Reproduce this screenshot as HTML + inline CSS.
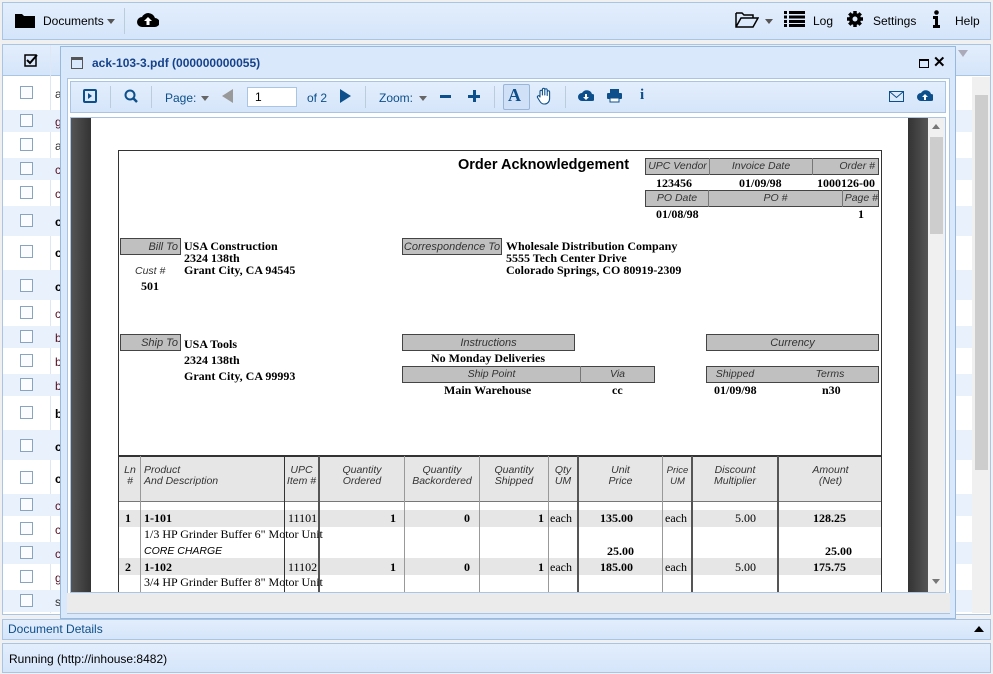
<!DOCTYPE html>
<html><head><meta charset="utf-8"><style>
*{box-sizing:border-box;margin:0;padding:0}
body{width:993px;height:674px;overflow:hidden;background:#f0f0f0;font-family:"Liberation Sans",sans-serif;font-size:12px;position:relative;color:#000}
.a{position:absolute}
.bar{background:linear-gradient(#e3eefc,#d5e5fa);border:1px solid #a9c5e3}
.lb{position:absolute;background:#c0c0c0;border:1px solid #444;font-style:italic;font-size:11px;color:#333;height:17px;line-height:16px;text-align:center}
.sr{font-family:"Liberation Serif",serif;font-weight:bold;font-size:12px;position:absolute;line-height:13px}
.srn{font-family:"Liberation Serif",serif;font-size:12px;position:absolute;line-height:13px}
.hd{position:absolute;font-style:italic;font-size:10.5px;color:#333;line-height:11px;text-align:center}
.vl{position:absolute;width:1px;background:#999}
.vt{position:absolute;width:2px;background:#555}
.cb{position:absolute;left:20px;width:13px;height:13px;border:1px solid #8aa4c0;background:#fafcff}
.tb{color:#0d4f8b;font-size:12px}
</style></head><body>
<div class="a bar" style="left:2px;top:2px;width:989px;height:38px"></div>
<svg class="a" style="left:15px;top:12px" width="20" height="16"><path d="M0 2h7l2 2h11v12H0z" fill="#000"/></svg>
<div class="a" style="left:43px;top:14px;font-size:12px">Documents</div>
<div class="a" style="left:107px;top:19px;border:4px solid transparent;border-top:5px solid #555"></div>
<div class="a" style="left:124px;top:8px;width:1px;height:26px;background:#bcd"></div>
<svg class="a" style="left:137px;top:10px" width="22" height="18"><path d="M5 17a5 5 0 0 1 0-10a7 7 0 0 1 13 1a4.5 4.5 0 0 1 0 9z" fill="#000"/><path d="M11 7l-4 4h2.5v4h3v-4H15z" fill="#fff"/></svg>
<svg class="a" style="left:735px;top:11px" width="24" height="17"><path d="M1 2h6l2 2h9v3M1 2v14h17l5-9H6L1 16" fill="none" stroke="#000" stroke-width="1.5"/></svg>
<div class="a" style="left:765px;top:19px;border:4px solid transparent;border-top:5px solid #555"></div>
<svg class="a" style="left:784px;top:11px" width="21" height="16"><g fill="#000"><rect x="0" y="0" width="3" height="3"/><rect x="5" y="0" width="16" height="3"/><rect x="0" y="4.5" width="3" height="3"/><rect x="5" y="4.5" width="16" height="3"/><rect x="0" y="9" width="3" height="3"/><rect x="5" y="9" width="16" height="3"/><rect x="0" y="13" width="3" height="3"/><rect x="5" y="13" width="16" height="3"/></g></svg>
<div class="a" style="left:813px;top:14px">Log</div>
<svg class="a" style="left:846px;top:10px" width="18" height="18" viewBox="0 0 18 18"><g fill="#000"><circle cx="9" cy="9" r="6"/><g stroke="#000" stroke-width="3.5"><path d="M9 1v16M1 9h16M3.3 3.3l11.4 11.4M14.7 3.3L3.3 14.7"/></g></g><circle cx="9" cy="9" r="2.5" fill="#dbe9fb"/></svg>
<div class="a" style="left:873px;top:14px">Settings</div>
<svg class="a" style="left:932px;top:10px" width="9" height="18"><circle cx="4.5" cy="2.5" r="2.3" fill="#000"/><path d="M1 6h5v9h2v3H1v-3h2V9H1z" fill="#000"/></svg>
<div class="a" style="left:955px;top:14px">Help</div>

<div class="a" style="left:2px;top:44px;width:989px;height:571px;background:#fff;border:1px solid #a9c5e3"></div>
<div class="a bar" style="left:3px;top:45px;width:987px;height:31px;border:none;border-bottom:1px solid #a9c5e3"></div>
<div class="a" style="left:50px;top:45px;width:1px;height:568px;background:#dde8f4"></div>
<svg class="a" style="left:24px;top:53px" width="15" height="14"><rect x="1" y="2" width="11" height="11" fill="none" stroke="#000" stroke-width="1.5"/><path d="M3 7l3 3 7-8" fill="none" stroke="#000" stroke-width="2"/></svg>
<div class="a" style="left:958px;top:50px;border:5px solid transparent;border-top:7px solid #aab"></div>
<div class="a" style="left:972px;top:77px;width:18px;height:536px;background:#f0f0f0"></div>
<div class="a" style="left:975px;top:95px;width:13px;height:375px;background:#cdcdcd"></div>
<div class="a" style="left:3px;top:110px;width:969px;height:22px;background:#e8f1fc"></div>
<div class="a" style="left:3px;top:158px;width:969px;height:22px;background:#e8f1fc"></div>
<div class="a" style="left:3px;top:206px;width:969px;height:30px;background:#e8f1fc"></div>
<div class="a" style="left:3px;top:270px;width:969px;height:30px;background:#e8f1fc"></div>
<div class="a" style="left:3px;top:326px;width:969px;height:22px;background:#e8f1fc"></div>
<div class="a" style="left:3px;top:374px;width:969px;height:22px;background:#e8f1fc"></div>
<div class="a" style="left:3px;top:430px;width:969px;height:30px;background:#e8f1fc"></div>
<div class="a" style="left:3px;top:494px;width:969px;height:22px;background:#e8f1fc"></div>
<div class="a" style="left:3px;top:542px;width:969px;height:22px;background:#e8f1fc"></div>
<div class="a" style="left:3px;top:590px;width:969px;height:22px;background:#e8f1fc"></div>
<div class="cb" style="top:86px"></div><div class="cb" style="top:114px"></div><div class="cb" style="top:138px"></div><div class="cb" style="top:162px"></div><div class="cb" style="top:186px"></div><div class="cb" style="top:214px"></div><div class="cb" style="top:245px"></div><div class="cb" style="top:279px"></div><div class="cb" style="top:306px"></div><div class="cb" style="top:330px"></div><div class="cb" style="top:354px"></div><div class="cb" style="top:378px"></div><div class="cb" style="top:406px"></div><div class="cb" style="top:439px"></div><div class="cb" style="top:471px"></div><div class="cb" style="top:498px"></div><div class="cb" style="top:522px"></div><div class="cb" style="top:546px"></div><div class="cb" style="top:570px"></div><div class="cb" style="top:594px"></div>
<div class="a" style="left:55px;top:87px;line-height:14px;color:#333">a<br><br><span style="color:#512">g</span></div>
<div class="a" style="left:55px;top:139px;color:#333">a</div><div class="a" style="left:55px;top:163px;color:#512">c</div><div class="a" style="left:55px;top:187px;color:#512">c</div>
<div class="a" style="left:55px;top:215px;font-weight:bold">c</div><div class="a" style="left:55px;top:246px;font-weight:bold">c</div><div class="a" style="left:55px;top:280px;font-weight:bold">c</div>
<div class="a" style="left:55px;top:307px;color:#512">c</div><div class="a" style="left:55px;top:331px;color:#512">b</div><div class="a" style="left:55px;top:355px;color:#512">b</div><div class="a" style="left:55px;top:379px;color:#512">b</div>
<div class="a" style="left:55px;top:407px;font-weight:bold">b</div><div class="a" style="left:55px;top:440px;font-weight:bold">c</div><div class="a" style="left:55px;top:472px;font-weight:bold">c</div>
<div class="a" style="left:55px;top:499px;color:#512">c</div><div class="a" style="left:55px;top:523px;color:#512">c</div><div class="a" style="left:55px;top:547px;color:#512">c</div><div class="a" style="left:55px;top:571px;color:#512">g</div><div class="a" style="left:55px;top:595px;color:#333">s</div>

<div class="a bar" style="left:2px;top:619px;width:989px;height:21px"></div>
<div class="a" style="left:8px;top:622px;color:#0d4f8b">Document Details</div>
<div class="a" style="left:974px;top:626px;border:5px solid transparent;border-bottom:6px solid #000;border-top:0"></div>
<div class="a bar" style="left:2px;top:643px;width:989px;height:30px"></div>
<div class="a" style="left:9px;top:652px">Running (http://inhouse:8482)</div>

<div class="a" style="left:60px;top:46px;width:896px;height:573px;background:#dae8fb;border:1px solid #98b8dc"></div>
<svg class="a" style="left:71px;top:57px" width="12" height="12"><rect x=".5" y=".5" width="11" height="11" fill="none" stroke="#555"/><rect x="1" y="1" width="10" height="2" fill="#555"/></svg>
<div class="a" style="left:92px;top:56px;font-weight:bold;font-size:12px;color:#15428b">ack-103-3.pdf (000000000055)</div>
<div class="a" style="left:919px;top:59px;width:10px;height:9px;border:1px solid #000;border-top-width:2px"></div>
<div class="a" style="left:933px;top:53px;font-size:15px;font-weight:bold">✕</div>
<div class="a" style="left:67px;top:78px;width:883px;height:536px;background:#fff;border:1px solid #a9c5e3"></div>
<div class="a bar" style="left:70px;top:81px;width:876px;height:32px"></div>
<svg class="a" style="left:83px;top:89px" width="14" height="14"><rect x="1" y="1" width="12" height="12" rx="1" fill="none" stroke="#0d4f8b" stroke-width="2"/><path d="M5 4l4 3-4 3z" fill="#0d4f8b"/></svg>
<div class="a" style="left:110px;top:86px;width:1px;height:22px;background:#bcd"></div>
<svg class="a" style="left:124px;top:89px" width="14" height="14"><circle cx="6" cy="6" r="4.5" fill="none" stroke="#0d4f8b" stroke-width="2"/><path d="M9 9l4 4" stroke="#0d4f8b" stroke-width="2.5"/></svg>
<div class="a" style="left:151px;top:86px;width:1px;height:22px;background:#bcd"></div>
<div class="a tb" style="left:165px;top:91px">Page:</div>
<div class="a" style="left:201px;top:96px;border:4px solid transparent;border-top:5px solid #666"></div>
<div class="a" style="left:222px;top:89px;border:7px solid transparent;border-right:11px solid #999;border-left:0"></div>
<div class="a" style="left:247px;top:87px;width:50px;height:20px;background:#fff;border:1px solid #a9c5e3;padding:2px 7px">1</div>
<div class="a tb" style="left:307px;top:91px">of 2</div>
<div class="a" style="left:340px;top:89px;border:7px solid transparent;border-left:11px solid #0d4f8b;border-right:0"></div>
<div class="a" style="left:365px;top:86px;width:1px;height:22px;background:#bcd"></div>
<div class="a tb" style="left:379px;top:91px">Zoom:</div>
<div class="a" style="left:419px;top:96px;border:4px solid transparent;border-top:5px solid #666"></div>
<div class="a" style="left:440px;top:95px;width:11px;height:3px;background:#0d4f8b"></div>
<div class="a" style="left:468px;top:95px;width:12px;height:3px;background:#0d4f8b"></div>
<div class="a" style="left:473px;top:90px;width:3px;height:12px;background:#0d4f8b"></div>
<div class="a" style="left:494px;top:86px;width:1px;height:22px;background:#bcd"></div>
<div class="a" style="left:503px;top:84px;width:27px;height:26px;border:1px solid #99b5d8;background:#cfe0f7;border-radius:2px"></div>
<div class="a" style="left:508px;top:85px;font-family:'Liberation Serif',serif;font-weight:bold;font-size:18px;color:#0d4f8b">A</div>
<svg class="a" style="left:536px;top:87px" width="16" height="18" viewBox="0 0 16 18"><path d="M4 10V4.5a1.2 1.2 0 0 1 2.4 0V8V2.5a1.2 1.2 0 0 1 2.4 0V8V3a1.2 1.2 0 0 1 2.4 0V8.5V5a1.2 1.2 0 0 1 2.4 0v6.5c0 3-2 5.5-5 5.5H8c-2 0-3-1-4-2.5L1.5 10.5a1.2 1.2 0 0 1 2-1.3z" fill="#fff" stroke="#0d4f8b" stroke-width="1.1" stroke-linejoin="round"/></svg>
<div class="a" style="left:565px;top:86px;width:1px;height:22px;background:#bcd"></div>
<svg class="a" style="left:578px;top:89px" width="16" height="13"><path d="M4 12a4 4 0 0 1 0-8a5.5 5.5 0 0 1 10 1a3.5 3.5 0 0 1 0 7z" fill="#0d4f8b"/><path d="M8 11l-3-3h2V5h2v3h2z" fill="#fff"/></svg>
<svg class="a" style="left:607px;top:89px" width="15" height="14"><rect x="3" y="0" width="9" height="4" fill="#0d4f8b"/><rect x="0" y="4" width="15" height="6" rx="1" fill="#0d4f8b"/><rect x="3" y="9" width="9" height="4" fill="#fff" stroke="#0d4f8b"/></svg>
<div class="a" style="left:640px;top:87px;font-family:'Liberation Serif',serif;font-weight:bold;font-size:15px;color:#0d4f8b">i</div>
<svg class="a" style="left:889px;top:91px" width="15" height="11"><rect x=".5" y=".5" width="14" height="10" fill="none" stroke="#0d4f8b"/><path d="M.5 .5l7 6 7-6" fill="none" stroke="#0d4f8b"/></svg>
<svg class="a" style="left:917px;top:89px" width="16" height="13"><path d="M4 12a4 4 0 0 1 0-8a5.5 5.5 0 0 1 10 1a3.5 3.5 0 0 1 0 7z" fill="#0d4f8b"/><path d="M8 5l-3 3h2v3h2V8h2z" fill="#fff"/></svg>

<div class="a" style="left:70px;top:117px;width:876px;height:476px;background:#fff;border:1px solid #a9c5e3"></div>
<div class="a" style="left:71px;top:118px;width:20px;height:474px;background:linear-gradient(90deg,#555,#333)"></div>
<div class="a" style="left:908px;top:118px;width:20px;height:474px;background:linear-gradient(90deg,#333,#555)"></div>
<div class="a" style="left:928px;top:118px;width:17px;height:474px;background:#f0f0f0"></div>
<div class="a" style="left:930px;top:137px;width:13px;height:97px;background:#cdcdcd"></div>
<div class="a" style="left:932px;top:124px;border:4px solid transparent;border-bottom:5px solid #777;border-top:0"></div>
<div class="a" style="left:932px;top:579px;border:4px solid transparent;border-top:5px solid #777;border-bottom:0"></div>
<div class="a" style="left:67px;top:593px;width:883px;height:20px;background:#ebebeb"></div>

<div class="a" style="left:118px;top:150px;width:764px;height:442px;border:1px solid #333;border-bottom:none"></div>
<div class="a" style="left:458px;top:157px;font-weight:bold;font-size:14.5px">Order Acknowledgement</div>
<div class="lb" style="left:645px;top:158px;width:234px"></div>
<div class="a" style="left:709px;top:158px;width:1px;height:17px;background:#777"></div><div class="a" style="left:812px;top:158px;width:1px;height:17px;background:#777"></div>
<div class="hd" style="left:646px;top:161px;width:63px">UPC Vendor</div><div class="hd" style="left:710px;top:161px;width:102px">Invoice Date</div><div class="hd" style="left:813px;top:161px;width:62px;text-align:right">Order #</div>
<div class="sr" style="left:656px;top:177px">123456</div><div class="sr" style="left:739px;top:177px">01/09/98</div><div class="sr" style="left:817px;top:177px">1000126-00</div>
<div class="lb" style="left:645px;top:190px;width:234px"></div>
<div class="a" style="left:708px;top:190px;width:1px;height:17px;background:#777"></div><div class="a" style="left:842px;top:190px;width:1px;height:17px;background:#777"></div>
<div class="hd" style="left:646px;top:193px;width:62px">PO Date</div><div class="hd" style="left:709px;top:193px;width:133px">PO #</div><div class="hd" style="left:843px;top:193px;width:35px;text-align:right">Page #</div>
<div class="sr" style="left:656px;top:208px">01/08/98</div><div class="sr" style="left:858px;top:208px">1</div>

<div class="lb" style="left:120px;top:238px;width:61px;text-align:right;padding-right:2px">Bill To</div>
<div class="sr" style="left:184px;top:240px;line-height:12px">USA Construction<br>2324 138th<br>Grant City, CA 94545</div>
<div class="a" style="left:135px;top:265px;font-style:italic;font-size:10.5px;color:#333">Cust #</div>
<div class="sr" style="left:141px;top:280px">501</div>
<div class="lb" style="left:402px;top:238px;width:100px">Correspondence To</div>
<div class="sr" style="left:506px;top:240px;line-height:12px">Wholesale Distribution Company<br>5555 Tech Center Drive<br>Colorado Springs, CO 80919-2309</div>

<div class="lb" style="left:120px;top:334px;width:61px;text-align:right;padding-right:2px">Ship To</div>
<div class="sr" style="left:184px;top:336px;line-height:16px">USA Tools<br>2324 138th<br>Grant City, CA 99993</div>
<div class="lb" style="left:402px;top:334px;width:173px">Instructions</div>
<div class="sr" style="left:431px;top:352px">No Monday Deliveries</div>
<div class="lb" style="left:402px;top:366px;width:253px"></div>
<div class="a" style="left:580px;top:366px;width:1px;height:17px;background:#777"></div>
<div class="hd" style="left:403px;top:369px;width:177px">Ship Point</div><div class="hd" style="left:581px;top:369px;width:73px">Via</div>
<div class="sr" style="left:444px;top:384px">Main Warehouse</div><div class="sr" style="left:612px;top:384px">cc</div>
<div class="lb" style="left:706px;top:334px;width:173px">Currency</div>
<div class="lb" style="left:706px;top:366px;width:173px"></div>
<div class="hd" style="left:710px;top:369px;width:50px">Shipped</div><div class="hd" style="left:805px;top:369px;width:50px">Terms</div>
<div class="sr" style="left:714px;top:384px">01/09/98</div><div class="sr" style="left:822px;top:384px">n30</div>

<div class="a" style="left:119px;top:455px;width:762px;height:47px;background:#e6e6e6;border-top:2px solid #333;border-bottom:1px solid #777"></div>
<div class="a" style="left:119px;top:510px;width:762px;height:17px;background:#e6e6e6"></div>
<div class="a" style="left:119px;top:558px;width:762px;height:17px;background:#e6e6e6"></div>
<div class="vl" style="left:140px;top:456px;height:136px"></div>
<div class="vt" style="left:284px;top:456px;height:136px;width:1px;background:#333"></div>
<div class="vt" style="left:318px;top:456px;height:136px"></div>
<div class="vl" style="left:404px;top:456px;height:136px"></div>
<div class="vl" style="left:479px;top:456px;height:136px"></div>
<div class="vl" style="left:548px;top:456px;height:136px"></div>
<div class="vt" style="left:577px;top:456px;height:136px"></div>
<div class="vl" style="left:662px;top:456px;height:136px"></div>
<div class="vt" style="left:691px;top:456px;height:136px"></div>
<div class="vt" style="left:777px;top:456px;height:136px"></div>
<div class="hd" style="left:120px;top:465px;width:20px">Ln<br>#</div>
<div class="hd" style="left:144px;top:465px;text-align:left">Product<br>And Description</div>
<div class="hd" style="left:285px;top:465px;width:33px">UPC<br>Item #</div>
<div class="hd" style="left:320px;top:465px;width:84px">Quantity<br>Ordered</div>
<div class="hd" style="left:405px;top:465px;width:74px">Quantity<br>Backordered</div>
<div class="hd" style="left:480px;top:465px;width:68px">Quantity<br>Shipped</div>
<div class="hd" style="left:549px;top:465px;width:28px">Qty<br>UM</div>
<div class="hd" style="left:579px;top:465px;width:83px">Unit<br>Price</div>
<div class="hd" style="left:663px;top:465px;width:29px;font-size:9.5px">Price<br>UM</div>
<div class="hd" style="left:693px;top:465px;width:84px">Discount<br>Multiplier</div>
<div class="hd" style="left:779px;top:465px;width:103px">Amount<br>(Net)</div>

<div class="sr" style="left:125px;top:512px">1</div><div class="sr" style="left:144px;top:512px">1-101</div>
<div class="srn" style="left:288px;top:512px">11101</div>
<div class="sr" style="left:390px;top:512px">1</div><div class="sr" style="left:464px;top:512px">0</div><div class="sr" style="left:538px;top:512px">1</div>
<div class="srn" style="left:550px;top:512px">each</div><div class="sr" style="left:600px;top:512px">135.00</div><div class="srn" style="left:665px;top:512px">each</div>
<div class="srn" style="left:735px;top:512px">5.00</div><div class="sr" style="left:813px;top:512px">128.25</div>
<div class="srn" style="left:144px;top:528px">1/3 HP Grinder Buffer 6" Motor Unit</div>
<div class="a" style="left:144px;top:545px;font-style:italic;font-size:10.5px">CORE CHARGE</div>
<div class="sr" style="left:607px;top:545px">25.00</div><div class="sr" style="left:825px;top:545px">25.00</div>
<div class="sr" style="left:125px;top:561px">2</div><div class="sr" style="left:144px;top:561px">1-102</div>
<div class="srn" style="left:288px;top:561px">11102</div>
<div class="sr" style="left:390px;top:561px">1</div><div class="sr" style="left:464px;top:561px">0</div><div class="sr" style="left:538px;top:561px">1</div>
<div class="srn" style="left:550px;top:561px">each</div><div class="sr" style="left:600px;top:561px">185.00</div><div class="srn" style="left:665px;top:561px">each</div>
<div class="srn" style="left:735px;top:561px">5.00</div><div class="sr" style="left:813px;top:561px">175.75</div>
<div class="srn" style="left:144px;top:576px">3/4 HP Grinder Buffer 8" Motor Unit</div>
</body></html>
